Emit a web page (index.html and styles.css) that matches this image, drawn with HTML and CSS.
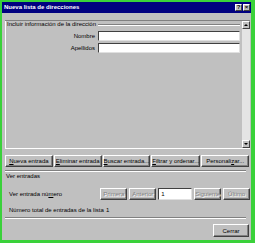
FILE: index.html
```html
<!DOCTYPE html>
<html lang="es">
<head>
<meta charset="utf-8">
<title>Nueva lista de direcciones</title>
<link rel="stylesheet" href="styles.css">
</head>
<body>
<div class="window">
  <div class="titlebar">
    <span class="title">Nueva lista de direcciones</span>
    <span class="tbtn">?</span>
    <span class="tbtn">×</span>
  </div>
  <div class="content">
    <div class="panel">
      <div class="panel-main">
        <div class="legend-row"><span class="legend">Incluir información de la dirección</span><span class="rule"></span></div>
        <div class="field"><span class="flabel">Nombre</span><span class="input"></span></div>
        <div class="field"><span class="flabel">Apellidos</span><span class="input"></span></div>
      </div>
      <div class="scrollbar">
        <span class="sbtn"><span class="arrow-up"></span></span>
        <span class="track"></span>
        <span class="sbtn"><span class="arrow-down"></span></span>
      </div>
    </div>
    <div class="btnrow">
      <span class="btn"><u>N</u>ueva entrada</span>
      <span class="btn"><u>E</u>liminar entrada</span>
      <span class="btn"><u>B</u>uscar entrada...</span>
      <span class="btn"><u>F</u>iltrar y ordenar...</span>
      <span class="btn">Personali<u>z</u>ar...</span>
    </div>
    <div class="rule-full"></div>
    <div class="section">
      <div class="section-title">Ver entradas</div>
      <div class="navrow">
        <span class="navlabel">Ver entrada nú<u>m</u>ero</span>
        <span class="btn nav disabled">Primera</span>
        <span class="btn nav disabled">Anterior</span>
        <span class="input num">1</span>
        <span class="btn nav disabled">Siguiente</span>
        <span class="btn nav disabled">Último</span>
      </div>
      <div class="totalrow">
        <span class="navlabel">Número total de entradas de la lista</span>
        <span class="total">1</span>
      </div>
    </div>
    <div class="rule-full"></div>
    <div class="footer">
      <span class="btn close">Cerrar</span>
    </div>
  </div>
</div>
</body>
</html>
```

FILE: styles.css
```css
html, body {
  margin: 0;
  padding: 0;
}
body {
  width: 255px;
  height: 243px;
  background: #3ad13a;
  overflow: hidden;
  font-family: "Liberation Sans", Arial, sans-serif;
  font-size: 6px;
  color: #000;
}
.window {
  margin: 2px 0 0 2px;
  width: 249px;
  height: 238px;
  background: #c0c0c0;
  display: flex;
  flex-direction: column;
}
.titlebar {
  height: 11px;
  background: #000080;
  display: flex;
  align-items: center;
  padding: 0 1px 0 2px;
  gap: 1px;
}
.title {
  flex: 1;
  color: #fff;
  font-weight: bold;
  font-size: 6px;
  line-height: 11px;
}
.tbtn {
  width: 7px;
  height: 7px;
  background: #c0c0c0;
  border-top: 1px solid #fff;
  border-left: 1px solid #fff;
  border-right: 1px solid #404040;
  border-bottom: 1px solid #404040;
  box-sizing: border-box;
  font-size: 6px;
  font-weight: bold;
  line-height: 5px;
  text-align: center;
}
.content {
  flex: 1;
  display: flex;
  flex-direction: column;
  padding: 7px 1px 0 3px;
}
.panel {
  height: 127px;
  display: flex;
  border-top: 1px solid #808080;
  border-bottom: 1px solid #fff;
}
.panel-main {
  flex: 1;
  border-left: 1px solid #fff;
  padding: 0 2px 0 1px;
}
.legend-row {
  display: flex;
  align-items: center;
  height: 7px;
}
.legend {
  line-height: 7px;
  padding-right: 2px;
}
.rule {
  flex: 1;
  height: 0;
  border-top: 1px solid #808080;
  border-bottom: 1px solid #fff;
}
.field {
  display: flex;
  align-items: center;
  margin-top: 3px;
  height: 10px;
}
.field + .field {
  margin-top: 2px;
}
.flabel {
  width: 88px;
  text-align: right;
  padding-right: 3px;
}
.input {
  flex: 1;
  height: 10px;
  background: #fff;
  box-sizing: border-box;
  border-top: 1px solid #404040;
  border-left: 1px solid #404040;
  border-right: 1px solid #e0e0e0;
  border-bottom: 1px solid #e0e0e0;
}
.scrollbar {
  width: 8px;
  display: flex;
  flex-direction: column;
  background: #e4e4e4;
}
.track {
  flex: 1;
}
.sbtn {
  height: 8px;
  background: #c0c0c0;
  box-sizing: border-box;
  border-top: 1px solid #fff;
  border-left: 1px solid #fff;
  border-right: 1px solid #404040;
  border-bottom: 1px solid #404040;
  display: flex;
  align-items: center;
  justify-content: center;
}
.arrow-up {
  width: 0;
  height: 0;
  border-left: 2px solid transparent;
  border-right: 2px solid transparent;
  border-bottom: 2px solid #000;
}
.arrow-down {
  width: 0;
  height: 0;
  border-left: 2px solid transparent;
  border-right: 2px solid transparent;
  border-top: 2px solid #000;
}
.btnrow {
  display: flex;
  gap: 1px;
  margin-top: 6px;
  padding-right: 1px;
}
.btn {
  height: 12px;
  box-sizing: border-box;
  background: #c0c0c0;
  border-top: 1px solid #fff;
  border-left: 1px solid #fff;
  border-right: 1px solid #404040;
  border-bottom: 1px solid #404040;
  box-shadow: inset -1px -1px 0 #808080;
  display: flex;
  align-items: center;
  justify-content: center;
  line-height: 10px;
  white-space: nowrap;
}
.btnrow .btn {
  flex: 1;
}
.rule-full {
  height: 0;
  border-top: 1px solid #808080;
  border-bottom: 1px solid #fff;
  margin-top: 3px;
  margin-right: 4px;
}
.section {
  padding-left: 1px;
}
.section-title {
  line-height: 7px;
  margin-top: 1px;
}
.navrow {
  display: flex;
  align-items: center;
  height: 13px;
  margin-top: 7px;
  gap: 2px;
}
.navlabel {
  padding-left: 3px;
  white-space: nowrap;
}
.navrow .navlabel {
  width: 90px;
}
.nav {
  width: 27px;
}
.disabled {
  color: #808080;
  text-shadow: 1px 1px 0 #fff;
}
.input.num {
  flex: none;
  width: 34px;
  height: 12px;
  line-height: 10px;
  padding-left: 2px;
}
.totalrow {
  display: grid;
  grid-template-columns: 99px auto;
  margin-top: 7px;
  line-height: 7px;
}
.total {
  padding-left: 1px;
}
.footer {
  display: flex;
  justify-content: flex-end;
  padding: 5px 1px 0 0;
}
.close {
  width: 36px;
  height: 13px;
}
```
